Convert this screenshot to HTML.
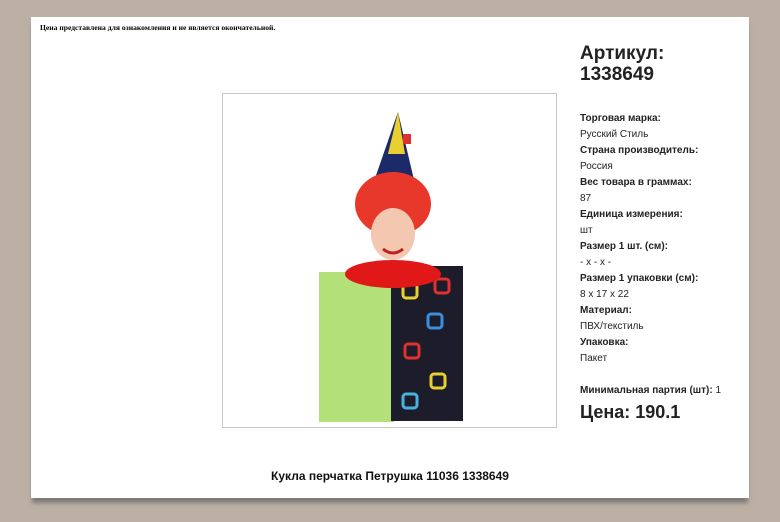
<!DOCTYPE html>
<html><head><meta charset="utf-8"><style>
body{margin:0;width:780px;height:522px;background:#bcb0a5;position:relative;overflow:hidden;font-family:"Liberation Sans",sans-serif;color:#222}
.page{position:absolute;left:31px;top:17px;width:718px;height:481px;background:#fff;box-shadow:0 6px 4px -1px #7f7b78}
.a{position:absolute}
.note{left:40px;top:23px;font-family:"Liberation Serif",serif;font-size:7.6px;font-weight:bold;color:#000}
.img{left:222px;top:93px;width:333px;height:333px;border:1px solid #c8c8c8;background:#fff}
.info{left:580px;top:43px;font-size:10px;line-height:16px;color:#222}
.info h1{font-size:19px;line-height:21px;margin:0 0 26px;font-weight:bold}
.info b{display:block}
.title{left:0;width:780px;text-align:center;top:469px;font-size:12px;font-weight:bold;color:#111}
</style></head><body>
<div class="page"></div>
<div class="a note">Цена представлена для ознакомления и не является окончательной.</div>
<div class="a img">
<svg width="333" height="333" viewBox="0 0 333 333">
<polygon points="150,90 175,18 192,90" fill="#1d2a6a"/>
<polygon points="165,60 175,18 182,60" fill="#e8d030"/>
<rect x="180" y="40" width="8" height="10" fill="#e03030"/>
<ellipse cx="170" cy="110" rx="38" ry="32" fill="#e8382c"/>
<ellipse cx="170" cy="140" rx="22" ry="26" fill="#f3c7b0"/>
<path d="M160 155 q10 8 20 0" stroke="#c02020" stroke-width="3" fill="none"/>
<rect x="96" y="178" width="75" height="150" fill="#b4e07a"/>
<rect x="168" y="172" width="72" height="155" fill="#1c1c2a"/>
<rect x="180" y="190" width="14" height="14" rx="3" fill="none" stroke="#e8d030" stroke-width="3"/>
<rect x="205" y="220" width="14" height="14" rx="3" fill="none" stroke="#3a8ee0" stroke-width="3"/>
<rect x="182" y="250" width="14" height="14" rx="3" fill="none" stroke="#e03030" stroke-width="3"/>
<rect x="208" y="280" width="14" height="14" rx="3" fill="none" stroke="#e8d030" stroke-width="3"/>
<rect x="180" y="300" width="14" height="14" rx="3" fill="none" stroke="#4ab0e0" stroke-width="3"/>
<rect x="212" y="185" width="14" height="14" rx="3" fill="none" stroke="#e03030" stroke-width="3"/>
<ellipse cx="170" cy="180" rx="48" ry="14" fill="#e01818"/>
</svg>
</div>
<div class="a info">
<h1>Артикул:<br>1338649</h1>
<b>Торговая марка:</b>Русский Стиль
<b>Страна производитель:</b>Россия
<b>Вес товара в граммах:</b>87
<b>Единица измерения:</b>шт
<b>Размер 1 шт. (см):</b>- x - x -
<b>Размер 1 упаковки (см):</b>8 x 17 x 22
<b>Материал:</b>ПВХ/текстиль
<b>Упаковка:</b>Пакет
<div style="margin-top:16px"><b style="display:inline">Минимальная партия (шт):</b> 1</div>
<div style="font-size:18px;font-weight:bold;margin-top:5px">Цена: 190.1</div>
</div>
<div class="a title">Кукла перчатка Петрушка 11036 1338649</div>
</body></html>
